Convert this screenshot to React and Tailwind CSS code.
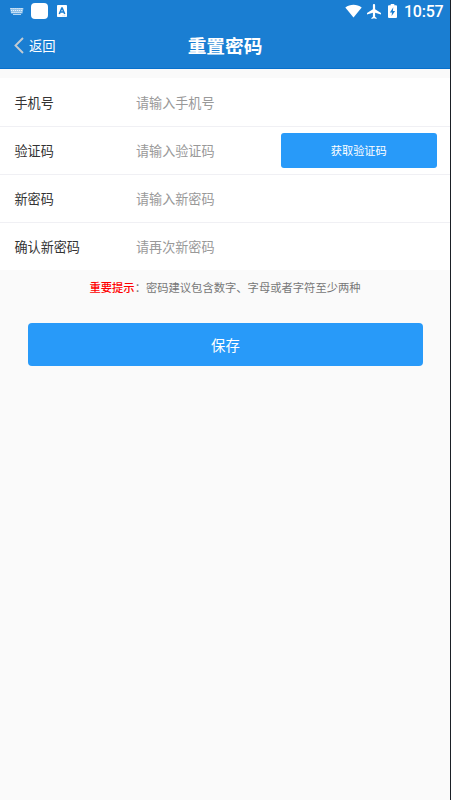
const fields = [
  { label: "手机号", placeholder: "请输入手机号", size: "h-[49px] border-b pt-px" },
  { label: "验证码", placeholder: "请输入验证码", size: "h-12 border-b", code: true },
  { label: "新密码", placeholder: "请输入新密码", size: "h-12 border-b" },
  { label: "确认新密码", placeholder: "请再次新密码", size: "h-[47px]" },
];

function StatusBar() {
  return (
    <div className="flex h-[22px] items-center pl-[10px] pr-[8px]">
      <svg className="mt-[2px]" width="14" height="8" viewBox="0 0 14 8">
        <path d="M0 0H13.500L12.500 5.500H1Z" fill="#8fc0e9" />
        <path d="M0.500 0.500H13M1 2.500H12.500M1.500 4.500H12" stroke="#e2f0fb" strokeWidth="1" strokeDasharray="1.200 0.800" />
        <path d="M3 6.500H11" stroke="#b4d5f1" strokeWidth="1" />
      </svg>
      <div className="ml-[7px] h-4 w-[17px] rounded-[4px] bg-white" />
      <svg className="ml-[9px]" width="10" height="12" viewBox="0 0 10 12">
        <rect width="10" height="12" rx="0.8" fill="#fff" />
        <path d="M2.300 9L4.800 3H5.200L7.700 9M3.200 7.100H6.800" fill="none" stroke="#1a7ed2" strokeWidth="1.500" />
        <path d="M5.500 10.800H9" stroke="#9fc9ed" strokeWidth="0.700" strokeDasharray="1 0.600" />
      </svg>
      <div className="ml-auto flex items-center">
        <svg width="17" height="14" viewBox="0 0 17 14">
          <path d="M0.300 3.500C5-0.100 12-0.100 16.700 3.500L8.500 13.600Z" fill="#fff" />
        </svg>
        <svg className="ml-[5px]" width="14" height="15" viewBox="2 2 19 20" preserveAspectRatio="none">
          <path
            d="M21 16v-2l-8-5V3.500c0-.83-.67-1.500-1.500-1.500S10 2.670 10 3.500V9l-8 5v2l8-2.500V19l-2 1.500V22l3.500-1 3.500 1v-1.500L13 19v-5.500l8 2.500z"
            fill="#fff"
          />
        </svg>
        <svg className="ml-[7px]" width="9" height="14" viewBox="0 0 9 14">
          <path d="M1 1.300H2.700V0H6.300V1.300H8Q9 1.300 9 2.300V13Q9 14 8 14H1Q0 14 0 13V2.300Q0 1.300 1 1.300Z" fill="#fff" />
          <path d="M5.300 3.300L1.900 8.400H4L3.600 12.100L7.100 6.900H4.900Z" fill="#1a7ed2" />
        </svg>
        <span className="ml-[7px] w-[38px] whitespace-nowrap pt-px font-['Roboto',sans-serif] text-[16px] font-medium leading-[22px] tracking-[-0.250px]">
          10:57
        </span>
      </div>
    </div>
  );
}

function Field({ label, placeholder, size, code }) {
  return (
    <div className={`flex items-center border-[#f0f0f4] pl-[14.500px] pr-[13.500px] ${size}`}>
      <label className="w-[121.500px] pt-px text-[13.100px] text-[#333]">{label}</label>
      <span className="pt-px text-[13.100px] text-[#999]">{placeholder}</span>
      {code && (
        <button className="ml-auto h-[35px] w-[155.500px] rounded-[3px] bg-[#289af9] text-[11.200px] text-white">
          获取验证码
        </button>
      )}
    </div>
  );
}

export default function App() {
  return (
    <div className="h-[800px] w-[451px] overflow-hidden border-r border-[#1b2027] bg-[#fafafa] font-['Noto_Sans_CJK_SC',sans-serif]">
      <header className="h-[69px] border-b border-[#0870cc] bg-[#1a7ed2] text-white">
        <StatusBar />
        <div className="grid h-[47px] grid-cols-[1fr_auto_1fr] items-center">
          <button className="flex items-center pl-[14px] text-[13.300px]">
            <svg width="10" height="17" viewBox="0 0 10 17" fill="none" stroke="#c3cbd2" strokeWidth="1.900">
              <path d="M9 1L1.500 8.500L9 16" />
            </svg>
            <span className="ml-[5px]">返回</span>
          </button>
          <h1 className="text-[18.700px] font-bold">重置密码</h1>
        </div>
      </header>
      <main>
        <div className="mt-[9px] bg-white">
          {fields.map((field) => (
            <Field key={field.label} {...field} />
          ))}
        </div>
        <p className="mt-2 text-center text-[11.300px] leading-[18px] text-[#777]">
          <span className="font-medium text-[#ff0000]">重要提示</span>：密码建议包含数字、字母或者字符至少两种
        </p>
        <button className="mx-7 mt-[27px] h-[43px] w-[395px] rounded-[4px] bg-[#289af9] text-[14.400px] text-white">
          保存
        </button>
      </main>
    </div>
  );
}
